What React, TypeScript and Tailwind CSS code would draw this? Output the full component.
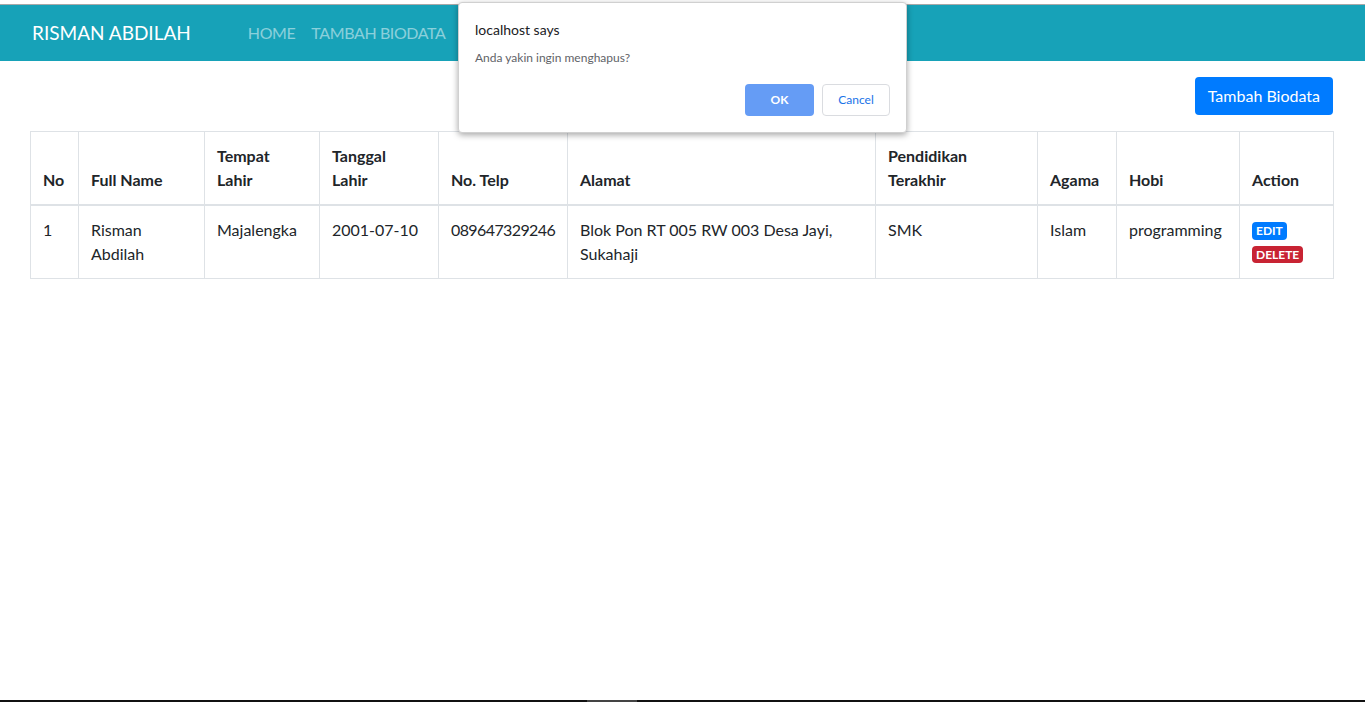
import React from "react";

const font = { fontFamily: "Lato, 'Noto Sans', sans-serif" };

export default function App() {
  const headers = [
    ["No"],
    ["Full Name"],
    ["Tempat", "Lahir"],
    ["Tanggal", "Lahir"],
    ["No. Telp"],
    ["Alamat"],
    ["Pendidikan", "Terakhir"],
    ["Agama"],
    ["Hobi"],
    ["Action"],
  ];
  return (
    <div className="relative min-h-screen flex flex-col bg-white text-[#212529] font-['Lato','Noto_Sans',sans-serif]">
      <div className="h-[4px] bg-white" />
      <div className="h-px bg-[#a8a8a8]" />
      <nav className="h-[56px] bg-[#17a2b8] flex items-center pl-[32px]">
        <span className="text-[19px] text-white">RISMAN ABDILAH</span>
        <ul className="flex ml-[49px] text-[16px] text-white/50 tracking-[-0.4px]">
          <li className="px-2">HOME</li>
          <li className="px-2">TAMBAH BIODATA</li>
          <li className="px-2">BIODATA</li>
        </ul>
      </nav>
      <main className="flex-1 pl-[30px] pr-[32px]">
        <div className="flex justify-end mt-4 mb-[16px]">
          <button className="h-[38px] px-[13px] rounded-[4px] bg-[#007bff] text-white text-[16px]">
            Tambah Biodata
          </button>
        </div>
        <table className="w-full table-fixed border-collapse text-[16px] leading-6">
          <colgroup>
            <col className="w-[48px]" />
            <col className="w-[126px]" />
            <col className="w-[115px]" />
            <col className="w-[119px]" />
            <col className="w-[129px]" />
            <col className="w-[308px]" />
            <col className="w-[162px]" />
            <col className="w-[79px]" />
            <col className="w-[123px]" />
            <col className="w-[94px]" />
          </colgroup>
          <thead>
            <tr>
              {headers.map((h, i) => (
                <th
                  key={i}
                  className="border border-[#dee2e6] border-b-2 px-3 py-3 text-left align-bottom font-bold"
                >
                  {h.map((l, j) => (
                    <div key={j}>{l}</div>
                  ))}
                </th>
              ))}
            </tr>
          </thead>
          <tbody>
            <tr className="align-top">
              <td className="border border-[#dee2e6] px-3 py-3">1</td>
              <td className="border border-[#dee2e6] px-3 py-3">Risman Abdilah</td>
              <td className="border border-[#dee2e6] px-3 py-3">Majalengka</td>
              <td className="border border-[#dee2e6] px-3 py-3">2001-07-10</td>
              <td className="border border-[#dee2e6] px-3 py-3 whitespace-nowrap tracking-[-0.6px]">089647329246</td>
              <td className="border border-[#dee2e6] px-3 py-3">Blok Pon RT 005 RW 003 Desa Jayi, Sukahaji</td>
              <td className="border border-[#dee2e6] px-3 py-3">SMK</td>
              <td className="border border-[#dee2e6] px-3 py-3">Islam</td>
              <td className="border border-[#dee2e6] px-3 py-3">programming</td>
              <td className="border border-[#dee2e6] px-3 pt-[16px] pb-3">
                <div className="flex flex-col items-start gap-[6px]">
                  <span className="inline-block rounded-[4px] bg-[#007bff] text-white text-[12px] font-bold leading-[18px] px-[4px]">
                    EDIT
                  </span>
                  <span className="inline-block rounded-[4px] bg-[#c82333] text-white text-[12px] font-bold leading-[17px] px-[4px]">
                    DELETE
                  </span>
                </div>
              </td>
            </tr>
          </tbody>
        </table>
      </main>
      <div className="h-[2px] bg-[#111111] flex">
        <div className="ml-[587px] w-[50px] bg-[#444444]" />
      </div>

      <div className="absolute left-[458px] top-[2px] w-[449px] h-[131px] bg-white rounded-[4px] border border-[#d0d0d0] shadow-[0_2px_6px_rgba(0,0,0,0.35)] px-[16px] pt-[18px]" style={font}>
        <div className="text-[14px] text-[#202124] leading-[18px]">localhost says</div>
        <div className="mt-[11px] text-[12px] text-[#5f6368] leading-[16px]">Anda yakin ingin menghapus?</div>
        <div className="flex justify-end gap-[8px] mt-[18px]">
          <button className="w-[69px] h-[32px] rounded-[4px] bg-[#659cf5] text-white text-[12px] font-bold">
            OK
          </button>
          <button className="w-[68px] h-[32px] rounded-[4px] bg-white border border-[#dadce0] text-[#1a73e8] text-[12px]">
            Cancel
          </button>
        </div>
      </div>
    </div>
  );
}
